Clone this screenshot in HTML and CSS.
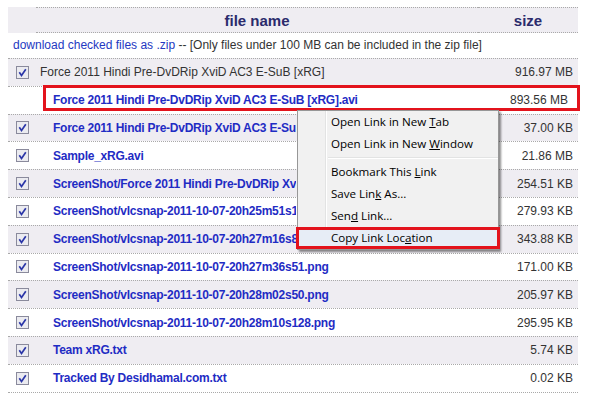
FILE: index.html
```html
<!DOCTYPE html>
<html lang="en">
<head>
    <meta charset="UTF-8">
    <title>Force 2011 - file listing</title>
    <link rel="stylesheet" href="styles.css">
</head>
<body>
    <div class="listing">
        <div class="row head">
            <div class="cell check"></div>
            <div class="cell name">file name</div>
            <div class="cell size">size</div>
        </div>
        <div class="zip"><a href="#">download checked files as .zip</a> -- [Only files under 100 MB can be included in the zip file]</div>

        <div class="row shade">
            <div class="cell check"><svg class="cb" width="13" height="13" viewBox="0 0 13 13"><rect x=".5" y=".5" width="12" height="12" fill="#ebebf0" stroke="#8a8a9c"/><path d="M3.3 6.3 L5.5 9.4 L9.8 3.2" fill="none" stroke="#2b36a8" stroke-width="1.7"/></svg></div>
            <div class="cell name folder">Force 2011 Hindi Pre-DvDRip XviD AC3 E-SuB [xRG]</div>
            <div class="cell size">916.97 MB</div>
        </div>
        <div class="row picked">
            <div class="cell check"></div>
            <div class="cell name"><a href="#">Force 2011 Hindi Pre-DvDRip XviD AC3 E-SuB [xRG].avi</a></div>
            <div class="cell size">893.56 MB</div>
            <span class="mark"></span>
        </div>
        <div class="row shade under">
            <div class="cell check"><svg class="cb" width="13" height="13" viewBox="0 0 13 13"><rect x=".5" y=".5" width="12" height="12" fill="#ebebf0" stroke="#8a8a9c"/><path d="M3.3 6.3 L5.5 9.4 L9.8 3.2" fill="none" stroke="#2b36a8" stroke-width="1.7"/></svg></div>
            <div class="cell name"><a href="#">Force 2011 Hindi Pre-DvDRip XviD AC3 E-SuB [xRG].srt</a></div>
            <div class="cell size">37.00 KB</div>
        </div>
        <div class="row">
            <div class="cell check"><svg class="cb" width="13" height="13" viewBox="0 0 13 13"><rect x=".5" y=".5" width="12" height="12" fill="#ebebf0" stroke="#8a8a9c"/><path d="M3.3 6.3 L5.5 9.4 L9.8 3.2" fill="none" stroke="#2b36a8" stroke-width="1.7"/></svg></div>
            <div class="cell name"><a href="#">Sample_xRG.avi</a></div>
            <div class="cell size">21.86 MB</div>
        </div>
        <div class="row shade under">
            <div class="cell check"><svg class="cb" width="13" height="13" viewBox="0 0 13 13"><rect x=".5" y=".5" width="12" height="12" fill="#ebebf0" stroke="#8a8a9c"/><path d="M3.3 6.3 L5.5 9.4 L9.8 3.2" fill="none" stroke="#2b36a8" stroke-width="1.7"/></svg></div>
            <div class="cell name"><a href="#">ScreenShot/Force 2011 Hindi Pre-DvDRip XviD AC3 E-SuB [xRG].jpg</a></div>
            <div class="cell size">254.51 KB</div>
        </div>
        <div class="row under">
            <div class="cell check"><svg class="cb" width="13" height="13" viewBox="0 0 13 13"><rect x=".5" y=".5" width="12" height="12" fill="#ebebf0" stroke="#8a8a9c"/><path d="M3.3 6.3 L5.5 9.4 L9.8 3.2" fill="none" stroke="#2b36a8" stroke-width="1.7"/></svg></div>
            <div class="cell name"><a href="#">ScreenShot/vlcsnap-2011-10-07-20h25m51s10.png</a></div>
            <div class="cell size">279.93 KB</div>
        </div>
        <div class="row shade under">
            <div class="cell check"><svg class="cb" width="13" height="13" viewBox="0 0 13 13"><rect x=".5" y=".5" width="12" height="12" fill="#ebebf0" stroke="#8a8a9c"/><path d="M3.3 6.3 L5.5 9.4 L9.8 3.2" fill="none" stroke="#2b36a8" stroke-width="1.7"/></svg></div>
            <div class="cell name"><a href="#">ScreenShot/vlcsnap-2011-10-07-20h27m16s86.png</a></div>
            <div class="cell size">343.88 KB</div>
        </div>
        <div class="row">
            <div class="cell check"><svg class="cb" width="13" height="13" viewBox="0 0 13 13"><rect x=".5" y=".5" width="12" height="12" fill="#ebebf0" stroke="#8a8a9c"/><path d="M3.3 6.3 L5.5 9.4 L9.8 3.2" fill="none" stroke="#2b36a8" stroke-width="1.7"/></svg></div>
            <div class="cell name"><a href="#">ScreenShot/vlcsnap-2011-10-07-20h27m36s51.png</a></div>
            <div class="cell size">171.00 KB</div>
        </div>
        <div class="row shade">
            <div class="cell check"><svg class="cb" width="13" height="13" viewBox="0 0 13 13"><rect x=".5" y=".5" width="12" height="12" fill="#ebebf0" stroke="#8a8a9c"/><path d="M3.3 6.3 L5.5 9.4 L9.8 3.2" fill="none" stroke="#2b36a8" stroke-width="1.7"/></svg></div>
            <div class="cell name"><a href="#">ScreenShot/vlcsnap-2011-10-07-20h28m02s50.png</a></div>
            <div class="cell size">205.97 KB</div>
        </div>
        <div class="row">
            <div class="cell check"><svg class="cb" width="13" height="13" viewBox="0 0 13 13"><rect x=".5" y=".5" width="12" height="12" fill="#ebebf0" stroke="#8a8a9c"/><path d="M3.3 6.3 L5.5 9.4 L9.8 3.2" fill="none" stroke="#2b36a8" stroke-width="1.7"/></svg></div>
            <div class="cell name"><a href="#">ScreenShot/vlcsnap-2011-10-07-20h28m10s128.png</a></div>
            <div class="cell size">295.95 KB</div>
        </div>
        <div class="row shade">
            <div class="cell check"><svg class="cb" width="13" height="13" viewBox="0 0 13 13"><rect x=".5" y=".5" width="12" height="12" fill="#ebebf0" stroke="#8a8a9c"/><path d="M3.3 6.3 L5.5 9.4 L9.8 3.2" fill="none" stroke="#2b36a8" stroke-width="1.7"/></svg></div>
            <div class="cell name"><a href="#">Team xRG.txt</a></div>
            <div class="cell size">5.74 KB</div>
        </div>
        <div class="row last">
            <div class="cell check"><svg class="cb" width="13" height="13" viewBox="0 0 13 13"><rect x=".5" y=".5" width="12" height="12" fill="#ebebf0" stroke="#8a8a9c"/><path d="M3.3 6.3 L5.5 9.4 L9.8 3.2" fill="none" stroke="#2b36a8" stroke-width="1.7"/></svg></div>
            <div class="cell name"><a href="#">Tracked By Desidhamal.com.txt</a></div>
            <div class="cell size">0.02 KB</div>
        </div>

        <!-- right-click menu over the highlighted file -->
        <div class="menu">
            <div class="item">Open Link in New <u>T</u>ab</div>
            <div class="item">Open Link in New <u>W</u>indow</div>
            <div class="sep"></div>
            <div class="item">Bookmark This <u>L</u>ink</div>
            <div class="item">Save Lin<u>k</u> As...</div>
            <div class="item">Sen<u>d</u> Link...</div>
            <div class="item hot">Copy Link Loc<u>a</u>tion</div>
        </div>
    </div>
</body>
</html>
```

FILE: styles.css
```css
body {
    margin: 7px 0 0 8px;
    font-family: 'Liberation Sans', Arial, sans-serif;
    font-size: 12px;
    color: #333;
    background: #fff;
}

a {
    text-decoration: none;
}

.listing {
    position: relative;
    width: 570px;
}

.row {
    position: relative;
    display: grid;
    grid-template-columns: 28px 1fr 100px;
    align-items: center;
    height: 27.8px;
    box-sizing: border-box;
    border-top: 1px dotted #a9a9a9;
}

.row.last {
    border-bottom: 1px dotted #a9a9a9;
    height: 28.8px;
}

.shade {
    background: #efedf2;
}

.cell {
    white-space: nowrap;
    overflow: hidden;
}

.check {
    display: flex;
    padding-left: 8px;
}

.cb {
    display: block;
}

.name {
    padding-left: 17px;
}

.name a {
    color: #1f2cc4;
    font-weight: bold;
    letter-spacing: -0.25px;
}

.name.folder {
    padding-left: 4px;
}

/* rows whose names run under the menu stop at its edge */
.under .name {
    width: 243px;
}

.size {
    text-align: right;
    padding-right: 5px;
}

/* header row */
.row.head {
    height: 26px;
    border-top: 0;
    background: #efedf2;
    align-items: stretch;
}

.head .name,
.head .size {
    display: flex;
    align-items: center;
    justify-content: center;
    padding: 0;
    border-top: 1px dotted #a9a9a9;
    border-bottom: 1px dotted #a9a9a9;
    font-size: 15px;
    font-weight: bold;
    color: #2b2b6c;
}

.zip {
    height: 25px;
    line-height: 25px;
    padding-left: 5px;
}

.zip a {
    color: #2438c2;
}

/* red annotation round the chosen file */
.picked .size {
    padding-right: 10px;
}

.mark {
    position: absolute;
    left: 35px;
    right: -2px;
    top: -2px;
    bottom: 3px;
    border: 3px solid #e3131c;
}

/* context menu */
.menu {
    position: absolute;
    left: 289px;
    top: 103px;
    width: 200px;
    z-index: 2;
    border: 1px solid #979797;
    background: linear-gradient(to right, #f1f1f1 27px, #e2e3e3 27px, #e2e3e3 28px, #fff 28px, #fff 29px, #f1f1f1 29px);
    box-shadow: 2px 2px 2px rgba(0, 0, 0, 0.45);
    font-family: 'Open Sans', 'Noto Sans', sans-serif;
    font-size: 11.6px;
    color: #000;
}

.item {
    position: relative;
    height: 22px;
    line-height: 22px;
    padding-left: 33px;
}

.sep {
    height: 6px;
    margin-left: 30px;
    background: linear-gradient(transparent 2px, #e2e3e3 2px, #e2e3e3 3px, #fff 3px, #fff 4px, transparent 4px);
}

.item.hot {
    background: #e7edf6;
}

.item.hot::after {
    content: '';
    position: absolute;
    left: -2px;
    right: -2px;
    top: 0;
    bottom: 0;
    border: 3px solid #e3131c;
}
```
